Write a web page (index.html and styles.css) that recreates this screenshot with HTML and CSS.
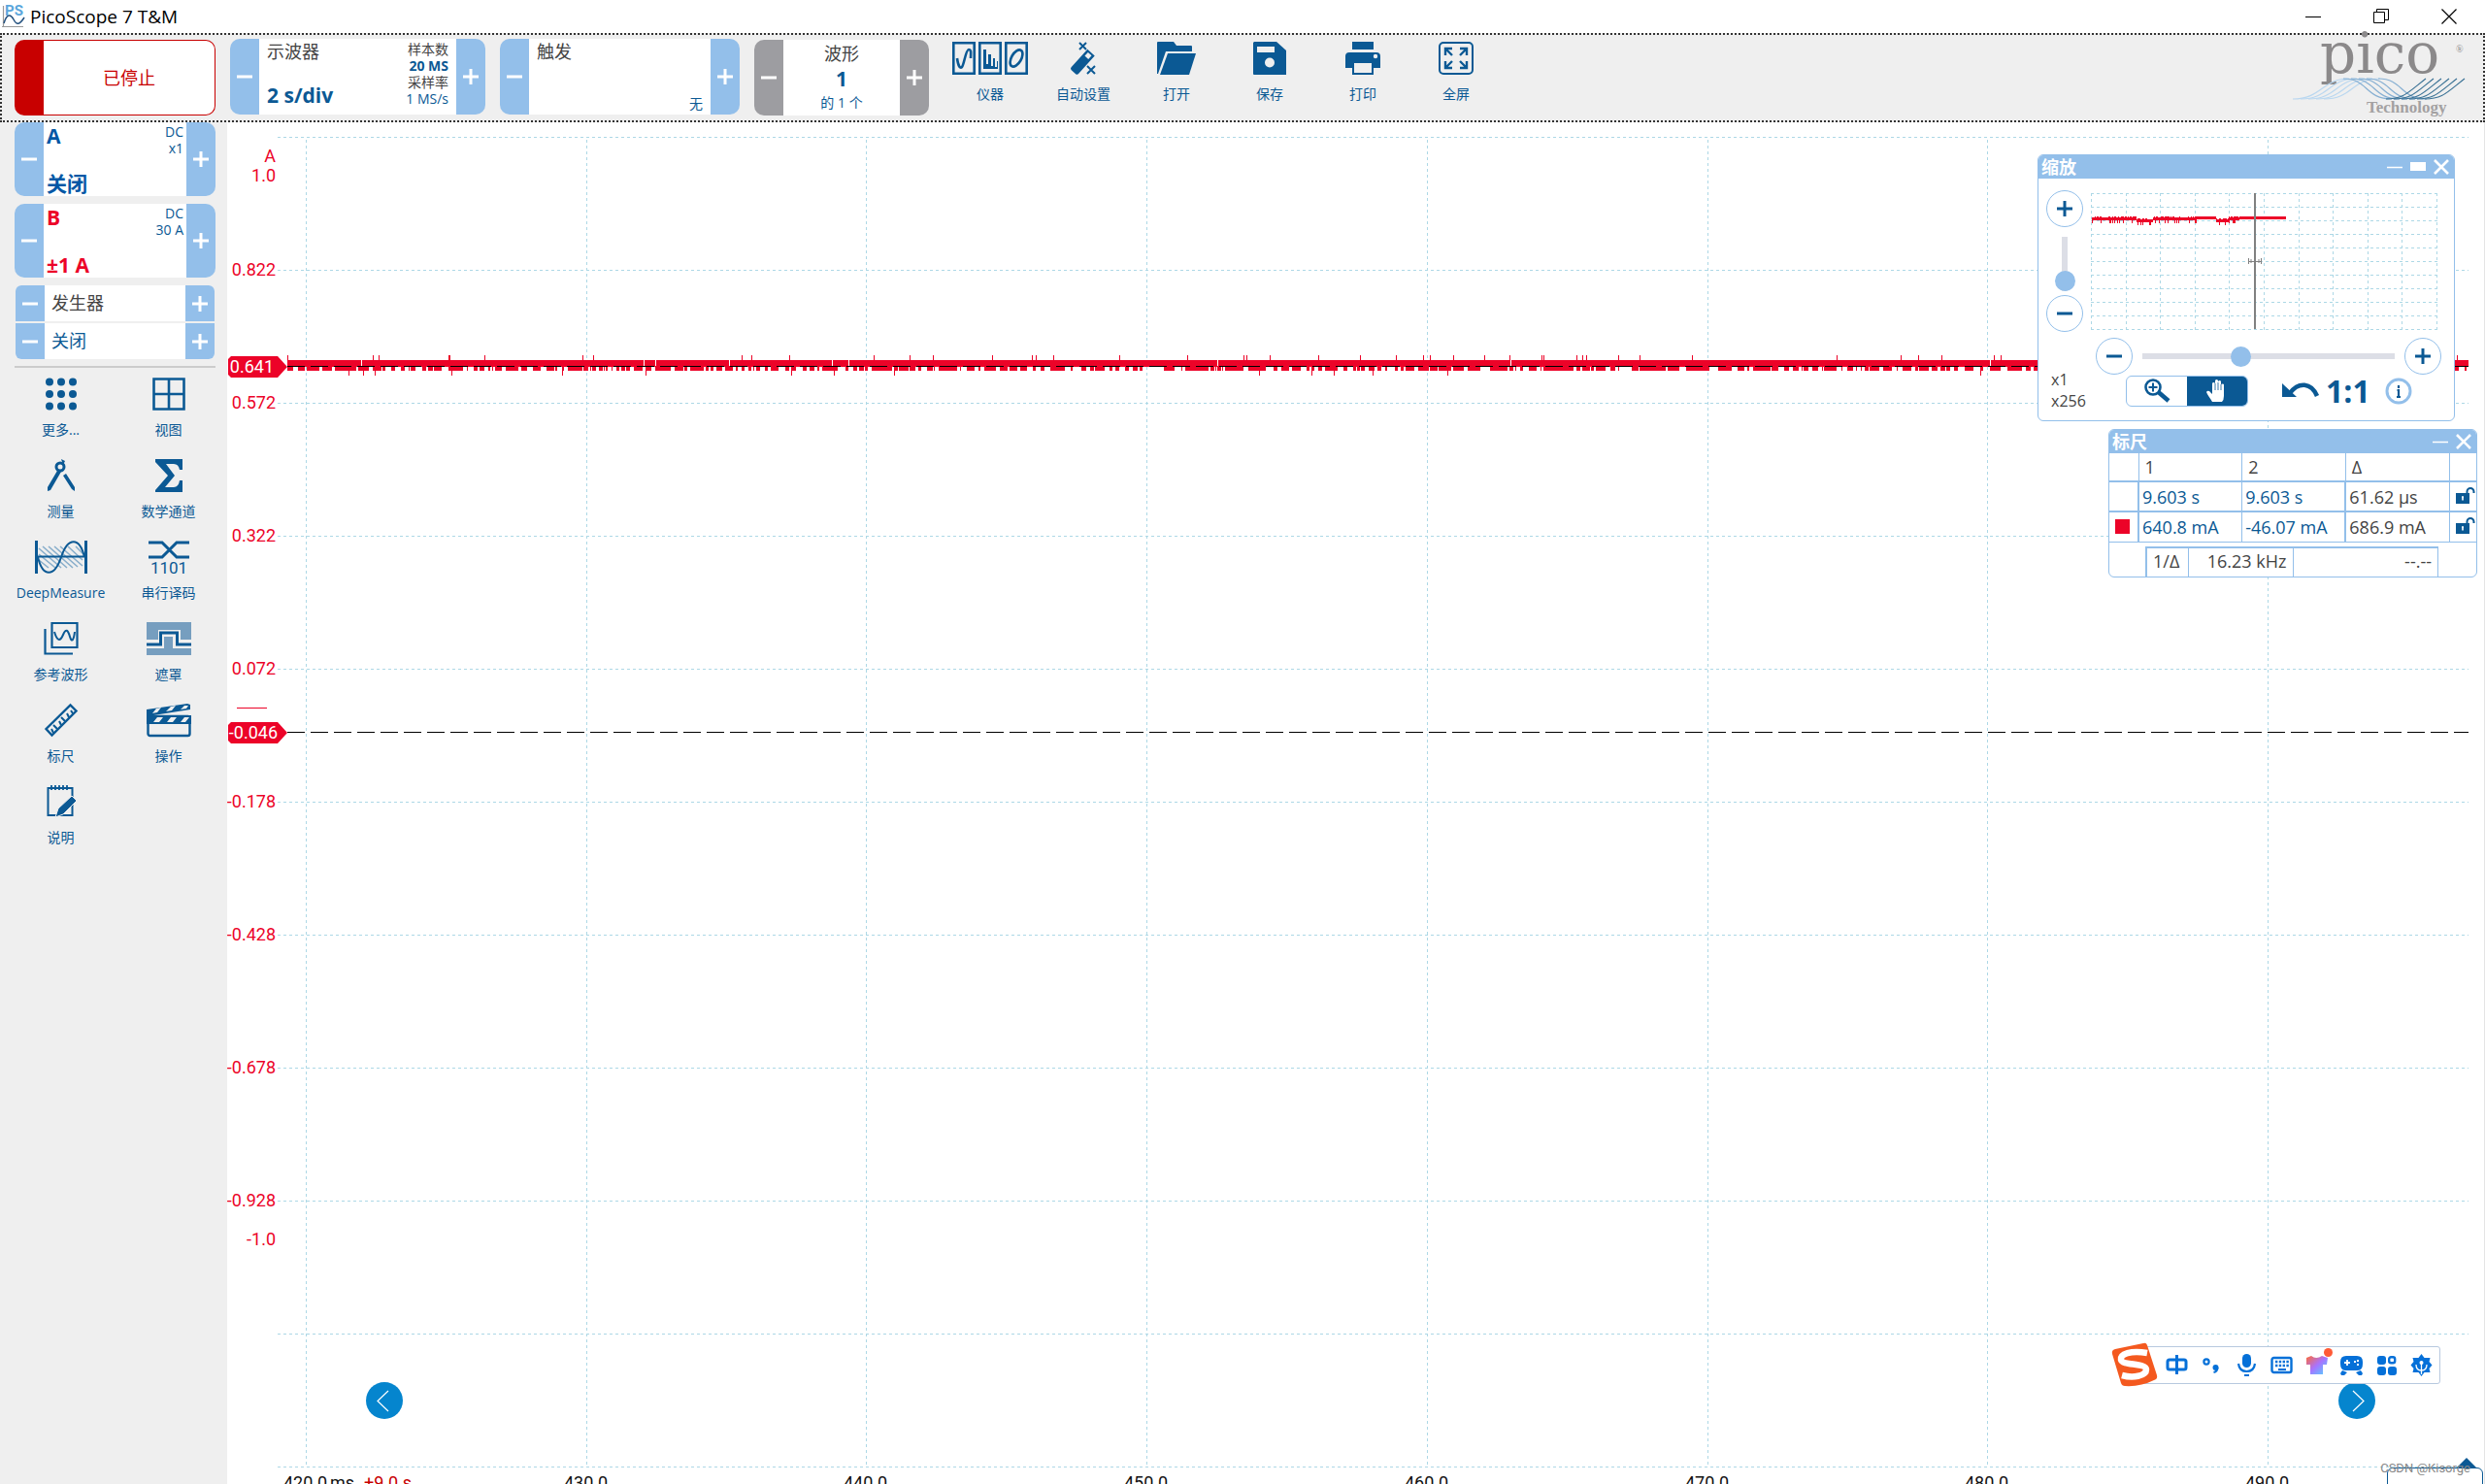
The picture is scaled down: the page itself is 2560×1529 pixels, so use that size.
FILE: index.html
```html
<!DOCTYPE html>
<html lang="zh-CN">
<head>
<meta charset="utf-8">
<title>PicoScope 7 T&amp;M</title>
<link rel="stylesheet" href="styles.css">
</head>
<body>
<svg class="defs" aria-hidden="true">
  <symbol id="minus" viewBox="0 0 16 16"><path d="M0 8h16" stroke="currentColor" stroke-width="3"/></symbol>
  <symbol id="plus" viewBox="0 0 16 16"><path d="M0 8h16M8 0v16" stroke="currentColor" stroke-width="3"/></symbol>
  <symbol id="close" viewBox="0 0 16 16"><path d="M1 1l14 14M15 1L1 15" stroke="currentColor" stroke-width="2.6"/></symbol>
  <symbol id="dash" viewBox="0 0 16 16"><path d="M0 8.500h16" stroke="currentColor" stroke-width="1.400"/></symbol>
  <symbol id="unlock" viewBox="0 0 20 18"><path d="M0 6h14v11H0z" fill="currentColor"/><path d="M11.500 6V4.500a3.500 3.500 0 0 1 7 0V6" fill="none" stroke="currentColor" stroke-width="2"/><path d="M7 9.500v4M6 10h2" stroke="#fff" stroke-width="1.600"/></symbol>
</svg>

<header class="titlebar">
  <svg class="app-icon" viewBox="0 0 24 24"><path d="M1.500 1v22M0 22.500h22" stroke="#9a9a9a" stroke-width="1.200"/><path d="M2 19C5 9 9 9 12 15s6 6 11-2" fill="none" stroke="#23507e" stroke-width="1.500"/><text x="3" y="11" font-size="15" class="app-ps">PS</text></svg>
  <h1>PicoScope 7 T&amp;M</h1>
  <div class="window-buttons">
    <button aria-label="最小化"><svg width="16" height="16"><path d="M0 8.500h16" stroke="#000"/></svg></button>
    <button aria-label="还原"><svg width="16" height="16"><path d="M.5 3.500h11v11H.5zM3.500 3.500V.5h12v11h-4" fill="none" stroke="#000"/></svg></button>
    <button aria-label="关闭"><svg width="16" height="16"><path d="M.5.5l15 15M15.500.5l-15 15" stroke="#000" stroke-width="1.200"/></svg></button>
  </div>
</header>

<div class="toolbar">
  <button class="run-button"><span>已停止</span></button>

  <section class="stepper scope-box">
    <button class="step" aria-label="减小时基"><svg><use href="#minus"/></svg></button>
    <div class="stepper-body split">
      <div class="col-between"><span class="label">示波器</span><strong class="value">2 s/div</strong></div>
      <div class="samples"><span class="dim">样本数</span><strong>20 MS</strong><span class="dim">采样率</span><span>1 MS/s</span></div>
    </div>
    <button class="step" aria-label="增大时基"><svg><use href="#plus"/></svg></button>
  </section>

  <section class="stepper trigger-box">
    <button class="step" aria-label="上一触发模式"><svg><use href="#minus"/></svg></button>
    <div class="stepper-body col-between"><span class="label">触发</span><span class="trigger-mode">无</span></div>
    <button class="step" aria-label="下一触发模式"><svg><use href="#plus"/></svg></button>
  </section>

  <section class="stepper grey wave-box">
    <button class="step" aria-label="上一个波形"><svg><use href="#minus"/></svg></button>
    <div class="stepper-body wave-body"><span class="label">波形</span><strong class="value">1</strong><span class="small">的 1 个</span></div>
    <button class="step" aria-label="下一个波形"><svg><use href="#plus"/></svg></button>
  </section>

  <nav class="tools">
    <button><svg width="78" height="34"><g fill="none" stroke="currentColor" stroke-width="2.600"><path d="M1.300 1.300h21.400v31.400H1.300zM28.300 1.300h21.400v31.400H28.300zM55.300 1.300h21.400v31.400H55.300z"/><path d="M5 17c1 8 3 11 5 9s4-18 7-18 2 4 2 9"/><ellipse cx="66" cy="17" rx="5" ry="9.500" transform="rotate(30 66 17)"/></g><path d="M32 28V8h3v15h2V13h3v12h2v-8h2v9h2v-6h1v8z" fill="currentColor"/></svg>仪器</button>
    <button><svg width="30" height="34"><g transform="rotate(42 15 20)"><path d="M10 8h10v25a2 2 0 0 1-2 2h-6a2 2 0 0 1-2-2z" fill="currentColor"/><path d="M12.500 10h5v5h-5z" fill="#efefef"/></g><path d="M11 1l7 7M18 1l-7 7M19 25l8 8M27 25l-8 8" stroke="currentColor" stroke-width="2"/></svg>自动设置</button>
    <button><svg width="40" height="34"><path d="M0 33V1q0-1 1-1h16l3 4h15q1 0 1 1v5H9L1 33z" fill="currentColor"/><path d="M3 34L11 12h29L33 34z" fill="currentColor"/></svg>打开</button>
    <button><svg width="34" height="34"><path d="M1 0h23l10 9v25H1q-1 0-1-1V1z" fill="currentColor"/><path d="M4 5h18v6H4z" fill="#efefef"/><circle cx="17" cy="21.500" r="5" fill="#efefef"/></svg>保存</button>
    <button><svg width="36" height="34"><path d="M7 0h22v8H7zM4 11h28q4 0 4 4v12h-7v7H7v-7H0V15q0-4 4-4z" fill="currentColor"/><path d="M9 22h18v10H9z" fill="#efefef"/><circle cx="31" cy="15" r="2.200" fill="#efefef"/></svg>打印</button>
    <button><svg width="36" height="34"><rect x="1" y="1" width="34" height="32" rx="4" fill="none" stroke="currentColor" stroke-width="2"/><path d="M14 14L8 8M22 14l6-6M14 20l-6 6M22 20l6 6M7 14V7h7M22 7h7v7M7 20v7h7M22 27h7v-7" fill="none" stroke="currentColor" stroke-width="2.400"/></svg>全屏</button>
  </nav>

  <svg class="brand" viewBox="0 0 182 84" role="img" aria-label="pico Technology">
    <text x="30" y="35" class="brand-name">pico</text><text x="170" y="14" class="brand-reg">®</text>
    <g fill="none" stroke-width="1.200">
      <g stroke="#b9d7f0"><path d="M2 62C32 62 32 41 60 41"/><path d="M10 62C40 62 38 41 68 41"/><path d="M18 62C48 62 46 41 76 41"/><path d="M26 62C56 62 54 41 84 41"/><path d="M34 62C64 62 62 41 92 41"/></g>
      <g stroke="#86afd2"><path d="M54 41C80 41 76 62 104 62"/><path d="M62 41C88 41 84 62 112 62"/><path d="M70 41C96 41 92 62 120 62"/><path d="M78 41C104 41 100 62 128 62"/><path d="M90 41C116 41 112 62 140 62"/></g>
      <g stroke="#3c7396"><path d="M98 62C116 62 120 56 139 41"/><path d="M106 62C124 62 128 56 147 41"/><path d="M114 62C132 62 136 56 155 41"/><path d="M122 62C140 62 144 56 163 41"/><path d="M130 62C148 62 152 56 171 41"/><path d="M138 62C156 62 160 56 179 41"/></g>
    </g>
    <text x="78" y="76" class="brand-sub">Technology</text>
  </svg>
</div>

<div class="workspace">
  <aside class="sidebar">
    <section class="stepper channel">
      <button class="step" aria-label="A 减"><svg><use href="#minus"/></svg></button>
      <div class="stepper-body split">
        <div class="col-between"><strong class="value chan-a">A</strong><strong class="value chan-a">关闭</strong></div>
        <div class="coupling"><span>DC</span><span>x1</span></div>
      </div>
      <button class="step" aria-label="A 加"><svg><use href="#plus"/></svg></button>
    </section>
    <section class="stepper channel">
      <button class="step" aria-label="B 减"><svg><use href="#minus"/></svg></button>
      <div class="stepper-body split">
        <div class="col-between"><strong class="value chan-b">B</strong><strong class="value chan-b">±1 A</strong></div>
        <div class="coupling"><span>DC</span><span>30 A</span></div>
      </div>
      <button class="step" aria-label="B 加"><svg><use href="#plus"/></svg></button>
    </section>
    <section class="generator">
      <div class="gen-row"><button class="step" aria-label="上一个"><svg><use href="#minus"/></svg></button><span class="label">发生器</span><button class="step" aria-label="下一个"><svg><use href="#plus"/></svg></button></div>
      <div class="gen-row"><button class="step" aria-label="减"><svg><use href="#minus"/></svg></button><span>关闭</span><button class="step" aria-label="加"><svg><use href="#plus"/></svg></button></div>
    </section>
    <nav class="side-tools">
      <button><svg width="34" height="34" fill="currentColor"><circle cx="5" cy="4.500" r="4"/><circle cx="17" cy="4.500" r="4"/><circle cx="29" cy="4.500" r="4"/><circle cx="5" cy="17" r="4"/><circle cx="17" cy="17" r="4"/><circle cx="29" cy="17" r="4"/><circle cx="5" cy="29.500" r="4"/><circle cx="17" cy="29.500" r="4"/><circle cx="29" cy="29.500" r="4"/></svg>更多...</button>
      <button><svg width="34" height="34"><path d="M1.500 1.500h31v31h-31zM17 1v32M1 17h32" fill="none" stroke="currentColor" stroke-width="2.600"/></svg>视图</button>
      <button><svg width="30" height="34"><circle cx="14" cy="8" r="4" fill="none" stroke="currentColor" stroke-width="3"/><path d="M15 0l4 2-2 4z" fill="currentColor"/><path d="M11 12L1 29v4l3-1 11-19zM17 17l3-2 9 14v4l-3-2z" fill="currentColor"/></svg>测量</button>
      <button><svg width="30" height="34"><path d="M1 0h28v11h-3q-1-6-6-6H12l9 12-10 12h9q5 0 6-7h3v12H1v-2l13-15L1 3z" fill="currentColor"/></svg>数学通道</button>
      <button><svg width="54" height="34"><path d="M4 8l23 20M4 14l17 14M4 20l10 8M8 6l25 22M14 6l25 22M20 6l24 21M26 6l23 20M34 6l15 14M42 6l8 8" stroke="#88aecb" stroke-width="1.600"/><path d="M1.500 0v34M52.500 0v34" stroke="currentColor" stroke-width="3"/><path d="M2 16.500h50M3 17C8 38 20 38 27 17S46-4 51 17" fill="none" stroke="currentColor" stroke-width="2"/></svg>DeepMeasure</button>
      <button><svg width="44" height="34"><path d="M1 2h14l15 15h13M1 17h14L30 2h13" fill="none" stroke="currentColor" stroke-width="3"/><text x="22" y="34" text-anchor="middle" class="icon-digits">1101</text></svg>串行译码</button>
      <button><svg width="36" height="34"><path d="M8.500 1h26v25h-26zM1.500 7v25.500H30" fill="none" stroke="currentColor" stroke-width="2.200"/><path d="M11 10c3 10 6 10 9 3s5-5 7 2 4 3 5-5" fill="none" stroke="currentColor" stroke-width="2"/></svg>参考波形</button>
      <button><svg width="46" height="34"><path d="M0 0h46v18H35V8H12v10H0zM0 27h18V15h9v12h19v7H0z" fill="#769ebf"/><path d="M0 23h14.500V11h17v12H46" fill="none" stroke="currentColor" stroke-width="3"/></svg>遮罩</button>
      <button><svg width="34" height="34"><path d="M1.500 26L26.500 1.500l6 6L7.500 32.500z" fill="none" stroke="currentColor" stroke-width="2.400"/><path d="M8 30l-2-4M12 26l-4-4M16 22l-2-4M20 18l-4-4M24 14l-2-4M28 10l-2-3" transform="translate(1 0)" stroke="currentColor" stroke-width="2"/></svg>标尺</button>
      <button><svg width="46" height="34"><rect x="1.500" y="13" width="43" height="20" rx="2" fill="none" stroke="currentColor" stroke-width="2.400"/><path d="M0 6L42 0l3 1v5L7 12h39v9H0z" fill="currentColor"/><path d="M6 10l4-5 5-1-4 5zM20 8l5-5 5-1-4 5zM35 6l4-4 4 0-2 3zM7 19l4-5h6l-4 5zM21 19l4-5h6l-4 5zM35 19l4-5h5l-4 5z" fill="#efefef"/></svg>操作</button>
      <button><svg width="30" height="34"><path d="M1.500 3h25v28h-25z" fill="none" stroke="currentColor" stroke-width="2"/><path d="M5 0v5M9 0v5M13 0v5M17 0v5M21 0v5" stroke="currentColor" stroke-width="1.800"/><path d="M9 33l3-9L26 11l5 5-14 14z" fill="currentColor" stroke="#efefef"/></svg>说明</button>
    </nav>
  </aside>

  <main class="scope">
    <svg class="plot" id="plot" role="img" aria-label="通道 B 波形"></svg>

    <button class="page-arrow prev" aria-label="上一页"><svg width="38" height="38"><path d="M23 9L12 19.500 23 30" fill="none" stroke="#fff" stroke-width="1.200"/></svg></button>
    <button class="page-arrow next" aria-label="下一页"><svg width="38" height="38"><path d="M15 9l11 10.500L15 30" fill="none" stroke="#fff" stroke-width="1.200"/></svg></button>

    <section class="panel zoom-panel">
      <header class="panel-head"><h2>缩放</h2>
        <button aria-label="最小化"><svg><use href="#dash"/></svg></button>
        <button aria-label="还原"><svg><rect x="0" y="3" width="16" height="9" fill="#fff"/></svg></button>
        <button aria-label="关闭缩放"><svg><use href="#close"/></svg></button>
      </header>
      <div class="zoom-top">
        <div class="zoom-y">
          <button class="round" aria-label="垂直放大"><svg><use href="#plus"/></svg></button>
          <input type="range" class="range-y" aria-label="垂直缩放" min="0" max="100" value="0">
          <button class="round" aria-label="垂直缩小"><svg><use href="#minus"/></svg></button>
        </div>
        <svg class="overview" id="overview" viewBox="0 0 358 142"></svg>
      </div>
      <div class="zoom-bottom">
        <div class="factors"><span>x1</span><span>x256</span></div>
        <div class="zoom-controls">
          <div class="zoom-x">
            <button class="round" aria-label="水平缩小"><svg><use href="#minus"/></svg></button>
            <input type="range" class="range-x" aria-label="水平缩放" min="0" max="100" value="38">
            <button class="round" aria-label="水平放大"><svg><use href="#plus"/></svg></button>
          </div>
          <div class="zoom-modes">
            <div class="segment">
              <button aria-label="放大镜"><svg width="28" height="26"><circle cx="10" cy="9" r="7.500" fill="none" stroke="currentColor" stroke-width="2.600"/><path d="M5.500 9h9M10 4.500v9" stroke="currentColor" stroke-width="2"/><path d="M15.500 14L26 23" stroke="currentColor" stroke-width="4.500"/></svg></button>
              <button class="on" aria-label="平移"><svg width="24" height="26"><path d="M7 24C5 20 2 17 1 14q1-2 3-1l3 3V5q1-2 3 0V2q1.500-2 3 0v1q2-2 3 0v3q2-1 3 0v12q0 4-2 6z" fill="#fff"/><path d="M10 5v7M13 4v8M16 6v6" stroke="#0b5994" stroke-width=".8"/></svg></button>
            </div>
            <button class="plain undo" aria-label="撤消"><svg width="38" height="18"><path d="M8 11C17-1 30 0 36 14" fill="none" stroke="currentColor" stroke-width="4.500"/><path d="M0 1v14h15z" fill="currentColor"/></svg></button>
            <button class="plain one-one">1:1</button>
            <button class="plain info" aria-label="信息"><svg width="28" height="28"><circle cx="14" cy="14" r="12" fill="none" stroke="#93bfea" stroke-width="3"/><path d="M14 8v3M12.500 13H14v7M12 20h4" fill="none" stroke="currentColor" stroke-width="2.200"/></svg></button>
          </div>
        </div>
      </div>
    </section>

    <section class="panel ruler-panel">
      <header class="panel-head"><h2>标尺</h2>
        <button aria-label="最小化标尺"><svg><use href="#dash"/></svg></button>
        <button aria-label="关闭标尺"><svg><use href="#close"/></svg></button>
      </header>
      <table class="rulers">
        <colgroup><col class="c-key"><col><col><col><col class="c-lock"></colgroup>
        <thead><tr><th></th><th>1</th><th>2</th><th>Δ</th><th></th></tr></thead>
        <tbody>
          <tr><td></td><td class="link">9.603 s</td><td class="link">9.603 s</td><td>61.62 µs</td><td><button class="plain" aria-label="锁定时间标尺"><svg width="20" height="18"><use href="#unlock"/></svg></button></td></tr>
          <tr><td><i class="swatch"></i></td><td class="link">640.8 mA</td><td class="link">-46.07 mA</td><td>686.9 mA</td><td><button class="plain" aria-label="锁定信号标尺"><svg width="20" height="18"><use href="#unlock"/></svg></button></td></tr>
        </tbody>
      </table>
      <table class="inverse"><colgroup><col class="c-inv"><col class="c-freq"><col></colgroup><tbody><tr><th>1/Δ</th><td>16.23 kHz</td><td>--.--</td></tr></tbody></table>
    </section>

    <div class="ime">
      <svg class="ime-logo" viewBox="0 0 48 46"><path d="M4 7L33 1q3-1 4 2l10 31q1 4-3 5-14 7-30 6-3 0-4-3L1 12q-1-4 3-5z" fill="#f4591f"/><path d="M37 11C20 8 9 12 10 18s26 3 26 10-14 9-25 6" fill="none" stroke="#fff" stroke-width="6.500"/></svg>
      <div class="ime-bar">
        <button aria-label="中文"><svg><g fill="none" stroke="currentColor" stroke-width="3"><rect x="2" y="6" width="19" height="10" rx="2"/><path d="M11.500 1v20"/></g></svg></button>
        <button aria-label="标点"><svg><circle cx="6" cy="8" r="2.600" fill="none" stroke="currentColor" stroke-width="2.200"/><circle cx="15.500" cy="14" r="3" fill="currentColor"/><path d="M17.500 14q0 4-4 5" fill="none" stroke="currentColor" stroke-width="2"/></svg></button>
        <button aria-label="语音"><svg><rect x="7" y="0" width="9" height="14" rx="4.500" fill="currentColor"/><path d="M3 10q1 8 8.500 8T20 10M9 22h5" fill="none" stroke="currentColor" stroke-width="2.200"/></svg></button>
        <button aria-label="键盘"><svg><rect x="1.500" y="4" width="20" height="15" rx="2" fill="none" stroke="currentColor" stroke-width="2.400"/><path d="M5 8h14M5 12h14" stroke="currentColor" stroke-width="2.400" stroke-dasharray="2.400 1.400"/><path d="M8 16h8" stroke="currentColor" stroke-width="2"/></svg></button>
        <button class="skin" aria-label="皮肤"><svg><defs><linearGradient id="shirt" x1="0" y1="0" x2="1" y2="1"><stop offset="0" stop-color="#ff6a36"/><stop offset=".5" stop-color="#a873ff"/><stop offset="1" stop-color="#4fd6ff"/></linearGradient></defs><path d="M1 4l5-2q5 4 11 0l6 2-1 7h-4v10H5V11H1z" fill="url(#shirt)"/></svg><i class="dot"></i></button>
        <button aria-label="游戏"><svg><path d="M6 2h11q6 0 6 6v2q0 7-5 7H5q-5 0-5-7V8q0-6 6-6zM0 20l2-3 5 2-3 3H1zM23 20l-2-3-5 2 3 3h3z" fill="currentColor"/><path d="M4 9h6M7 6v6M14 8h2M17 11h2M17 7h2" stroke="#fff" stroke-width="1.800"/></svg></button>
        <button aria-label="应用"><svg><rect x="2" y="2" width="9" height="9" rx="3" fill="currentColor"/><rect x="2" y="13" width="9" height="9" rx="3" fill="currentColor"/><rect x="13" y="13" width="9" height="9" rx="3" fill="currentColor"/><rect x="14.200" y="3.200" width="6" height="6" rx="2" fill="none" stroke="currentColor" stroke-width="2.400"/></svg></button>
        <button aria-label="设置"><svg><path d="M11.500 0l3 4h6l-1 4 3 3.500-3 3.500 1 4h-6l-3 4-3-4h-6l1-4-3-3.500L3.500 8l-1-4h6z" fill="currentColor"/><path d="M11.500 8v13M6 11q0 6 5.500 6T17 11" fill="none" stroke="#fff" stroke-width="1.300"/><circle cx="11.500" cy="9" r="2" fill="#fff"/></svg></button>
      </div>
    </div>

    <div class="corner-tab"></div>
    <span class="watermark">CSDN @Kisorge</span>
  </main>
</div>
<script src="plot.js"></script>
</body>
</html>
```
FILE: styles.css
```css
:root {
  --blue: #0b5994;
  --light: #93bfea;
  --red: #ec0328;
  --grey: #efefef;
  --text: #444;
}
* { box-sizing: border-box; }
body {
  margin: 0;
  height: 100vh;
  overflow: hidden;
  display: flex;
  flex-direction: column;
  background: #fff;
  color: var(--blue);
  font: 14px/18px "Open Sans", "Noto Sans CJK SC", sans-serif;
}
button {
  border: 0;
  padding: 0;
  background: none;
  color: inherit;
  font: inherit;
}
svg { display: block; overflow: visible; }
.defs { position: absolute; width: 0; height: 0; }

/* title bar */
.titlebar { display: flex; align-items: center; gap: 5px; flex: 0 0 34px; padding: 0 2px; color: #000; }
.app-icon { width: 24px; height: 24px; }
.app-ps { font-family: Roboto, sans-serif; font-weight: 700; fill: #5aa6dc; }
.titlebar h1 { margin: 0; font-size: 19px; line-height: 24px; font-weight: 400; flex: 1; }
.window-buttons { display: flex; }
.window-buttons button { width: 70px; display: flex; justify-content: center; }

/* toolbar */
.toolbar {
  flex: 0 0 92px;
  display: flex;
  align-items: flex-start;
  padding: 4px 16px 0 13px;
  border: 2px dotted #333;
  background: var(--grey);
}
.run-button {
  width: 207px;
  height: 78px;
  margin: 1px 15px 0 0;
  border: 1px solid #c80000;
  border-left-width: 30px;
  border-radius: 10px;
  background: #fff;
  color: #c80000;
  font-size: 18px;
}
.stepper { display: flex; height: 78px; }
.step {
  flex: 0 0 30px;
  display: flex;
  align-items: center;
  justify-content: center;
  background: var(--light);
  color: #fff;
}
.step svg { width: 16px; height: 16px; }
.stepper .step:first-child { border-radius: 10px 0 0 10px; }
.stepper .step:last-child { border-radius: 0 10px 10px 0; }
.grey .step { background: #9d9da1; }
.stepper-body { flex: 1; background: #fff; padding: 0 8px; }
.split { display: flex; justify-content: space-between; }
.col-between { display: flex; flex-direction: column; justify-content: space-between; }
.label { font-size: 18px; line-height: 26px; color: var(--text); }
.value { font-size: 21px; line-height: 26px; }
.scope-box { width: 263px; margin-right: 15px; }
.scope-box .col-between { padding-bottom: 7px; }
.samples { display: flex; flex-direction: column; align-items: flex-end; line-height: 17px; padding-top: 2px; }
.dim { color: var(--text); }
.trigger-box { width: 247px; margin-right: 15px; }
.trigger-mode { align-self: flex-end; line-height: 22px; }
.wave-box { width: 180px; margin-top: 1px; }
.wave-body { display: flex; flex-direction: column; align-items: center; padding-top: 1px; }
.small { line-height: 24px; }
.tools { display: flex; margin-left: 15px; }
.tools button { width: 96px; }
.tools button, .side-tools button { display: flex; flex-direction: column; align-items: center; gap: 11px; }
.tools button { padding-top: 3px; }
.brand { width: 182px; height: 80px; margin-left: auto; }
.brand { height: 84px; }
.brand-name { font: 58px "DejaVu Serif", serif; fill: #8b898a; }
.brand-reg { font: 10px "Liberation Serif", serif; fill: #8b898a; }
.brand-sub { font: bold 17px "Liberation Serif", serif; fill: #a3a1a2; }

/* sidebar */
.workspace { flex: 1; min-height: 0; display: flex; }
.sidebar { flex: 0 0 234px; padding: 0 12px 0 15px; background: var(--grey); }
.channel { height: 76px; margin-bottom: 8px; }
.channel .stepper-body { padding: 0 3px; }
.channel .col-between { padding-top: 1px; }
.coupling { display: flex; flex-direction: column; align-items: flex-end; line-height: 17px; padding-top: 1px; }
.chan-a { color: #0057a5; }
.chan-b { color: var(--red); }
.generator { display: flex; flex-direction: column; gap: 2px; padding-bottom: 7px; border-bottom: 2px solid #ccc; }
.gen-row { display: flex; height: 37px; margin: 0 1px; overflow: hidden; background: #fff; font-size: 18px; line-height: 36px; }
.gen-row:first-child { border-radius: 6px 6px 0 0; }
.gen-row:last-child { border-radius: 0 0 6px 6px; }
.gen-row span { flex: 1; padding-left: 7px; line-height: 36px; }
.side-tools {
  display: grid;
  grid-template-columns: 111px 111px;
  grid-auto-rows: 84px;
  margin: 10px -8px 0;
}
.side-tools button { justify-content: flex-start; }
.icon-digits { font: 17px Roboto, sans-serif; fill: var(--blue); }

/* plot */
.scope { flex: 1; min-width: 0; position: relative; overflow: hidden; border-right: 1px solid #e4e4e4; }
.plot { width: 100%; height: 100%; font: 18px Roboto, sans-serif; }
.grid { fill: none; stroke: #add8e6; stroke-dasharray: 3 3; }
.axis-y { fill: var(--red); text-anchor: end; }
.axis-x { fill: #111; }
.axis-offset { fill: #c80000; }
.trace { fill: none; stroke: var(--red); }
.ruler-line { stroke: #000; stroke-dasharray: 18 6; }
.flag { fill: var(--red); }
.flag-text { fill: #fff; text-anchor: end; }
.page-arrow { position: absolute; top: 1298px; width: 38px; height: 38px; border-radius: 50%; background: #0585ce; }
.prev { left: 143px; }
.next { right: 112px; }

/* floating panels */
.panel { position: absolute; background: #fff; border: 1px solid var(--light); border-radius: 6px; overflow: hidden; }
.panel-head { display: flex; align-items: center; gap: 8px; height: 24px; padding: 0 5px 0 3px; background: var(--light); color: #fff; }
.panel-head h2 { flex: 1; margin: 0; font-size: 18px; line-height: 24px; }
.panel-head svg { width: 16px; height: 16px; }
.zoom-panel { top: 33px; right: 30px; width: 430px; height: 275px; }
.zoom-top { display: flex; gap: 8px; padding: 12px 8px 0; }
.zoom-y { display: flex; flex-direction: column; align-items: center; gap: 4px; width: 38px; }
.overview { width: 358px; height: 142px; margin-top: 3px; }
.round {
  flex: 0 0 38px;
  width: 38px;
  height: 38px;
  display: flex;
  align-items: center;
  justify-content: center;
  border: 1px solid var(--light);
  border-radius: 50%;
}
.round svg { width: 16px; height: 16px; }
input[type="range"] { appearance: none; margin: 0; background: none; }
.range-y { writing-mode: vertical-lr; direction: rtl; width: 22px; height: 62px; padding-top: 6px; }
.range-x { flex: 1; min-width: 0; height: 22px; }
.range-y::-webkit-slider-runnable-track { width: 6px; background: #dcdee6; }
.range-x::-webkit-slider-runnable-track { height: 6px; background: #dcdee6; }
.range-x::-webkit-slider-thumb { appearance: none; width: 21px; height: 21px; margin-top: -7px; border-radius: 50%; background: var(--light); }
.range-y::-webkit-slider-thumb { appearance: none; width: 21px; height: 21px; margin-left: -7px; border-radius: 50%; background: var(--light); }
.zoom-bottom { display: flex; padding: 6px 13px 0; }
.factors { display: flex; flex-direction: column; width: 46px; padding-top: 32px; font-size: 16px; line-height: 22px; color: var(--text); }
.zoom-controls { flex: 1; }
.zoom-x { display: flex; align-items: center; gap: 10px; }
.zoom-modes { display: flex; align-items: center; height: 34px; padding-left: 31px; }
.segment { display: flex; width: 126px; height: 32px; border: 1px solid var(--light); border-radius: 6px; overflow: hidden; }
.segment button { flex: 1; display: flex; align-items: center; justify-content: center; }
.segment .on { background: var(--blue); }
.undo { margin-left: 35px; }
.one-one { margin: 0 15px 0 7px; font: bold 32px/32px "Open Sans", sans-serif; }

.ruler-panel { top: 316px; right: 7px; width: 380px; height: 153px; font-size: 18px; }
table { border-collapse: collapse; table-layout: fixed; }
th, td { padding: 0 0 0 3px; text-align: left; font-weight: 400; color: var(--text); border: 1px solid var(--light); white-space: nowrap; }
.rulers { width: 100%; border-style: hidden; border-bottom: 1px solid var(--light); }
.rulers tr { height: 31px; }
.rulers thead tr { height: 29px; }
.rulers th { padding-left: 6px; }
.rulers .link { color: var(--blue); }
.rulers tbody td { border-top: 2px solid var(--light); }
.rulers td:nth-child(2) { border-left-width: 2px; }
.rulers td:nth-child(4) { border-left-width: 2px; }
.c-key { width: 30px; }
.c-lock { width: 28px; }
.rulers td:last-child { padding-left: 6px; color: var(--blue); }
.swatch { display: block; width: 15px; height: 15px; margin-left: 3px; background: var(--red); }
.inverse { width: 302px; margin: 4px 0 0 37px; border-top: 2px solid var(--light); border-left: 2px solid var(--light); }
.inverse tr { height: 31px; }
.inverse th, .inverse td { vertical-align: top; line-height: 26px; }
.inverse th { padding-left: 6px; }
.inverse td { text-align: right; padding: 0 6px; }
.c-inv { width: 43px; }
.c-freq { width: 108px; }

/* input method bar */
.ime { position: absolute; top: 1257px; right: 45px; display: flex; align-items: center; color: #0570d8; }
.ime-logo { width: 48px; height: 46px; z-index: 1; }
.ime-bar { display: flex; height: 39px; margin-left: -24px; padding-left: 24px; padding-right: 1px; background: #fff; border: 1px solid #b8c9df; border-radius: 3px; }
.ime-bar button { display: flex; align-items: center; justify-content: center; width: 36px; position: relative; }
.ime-bar svg { width: 23px; height: 23px; }
.dot { position: absolute; top: 1px; right: 1px; width: 9px; height: 9px; border-radius: 50%; background: #ff5a36; }

.corner-tab { position: absolute; top: 1386px; right: 1px; width: 99px; height: 40px; border: 1px solid var(--blue); border-radius: 6px; }
.corner-tab::before { content: ""; position: absolute; top: -11px; right: 6px; border: 10px solid transparent; border-top: 0; border-bottom-color: var(--blue); }
.watermark { position: absolute; top: 1378px; right: 14px; font: 13px/18px Roboto, sans-serif; color: #888; }
```
FILE: plot.js
```js
const NS = 'http://www.w3.org/2000/svg';
const LEFT = 50, TOP = 15, ROW = 137, COL = 288.7, FIRST = 81, RIGHT_PAD = 16;

function add(parent, tag, attrs, text) {
  const el = document.createElementNS(NS, tag);
  for (const key in attrs) el.setAttribute(key, attrs[key]);
  if (text) el.textContent = text;
  parent.appendChild(el);
  return el;
}

function noise(seed) {
  return () => (seed = (seed * 16807) % 2147483647) / 2147483647;
}

function drawPlot() {
  const plot = document.getElementById('plot');
  plot.replaceChildren();
  const right = plot.clientWidth - RIGHT_PAD;
  const bottom = TOP + 10 * ROW;
  const columns = [];
  for (let i = 0; FIRST + i * COL < right; i++) columns.push(Math.round(FIRST + i * COL));

  let grid = '';
  for (let r = 0; r <= 10; r++) grid += `M${LEFT + 2} ${TOP + r * ROW + 0.5}H${right}`;
  columns.forEach(x => { grid += `M${x + 0.5} ${TOP + 3}V${bottom}`; });
  add(plot, 'path', { d: grid, class: 'grid' });

  const labels = [['A', 41], ['1.0', 61], ['-1.0', 1157]];
  ['0.822', '0.572', '0.322', '0.072', '-0.178', '-0.428', '-0.678', '-0.928']
    .forEach((t, i) => labels.push([t, 158 + i * ROW]));
  labels.forEach(([t, y]) => add(plot, 'text', { x: LEFT, y, class: 'axis-y' }, t));

  columns.forEach((x, i) => {
    add(plot, 'text', { x: x - 23, y: bottom + 23, class: 'axis-x' }, (420 + i * 10).toFixed(1));
  });
  add(plot, 'text', { x: FIRST + 25, y: bottom + 23, class: 'axis-x' }, 'ms');
  add(plot, 'text', { x: 141, y: bottom + 23, class: 'axis-offset' }, '+9.0 s');

  const rand = noise(641);
  let d = '';
  for (let x = 62; x < right; x++) {
    const top = rand() < 0.06 ? 240 : rand() < 0.015 ? 251 : 245;
    const low = rand() < 0.02 ? 261 : rand() < 0.62 ? 256 : 252;
    const run = 1 + Math.floor(rand() * 4);
    d += `M${x + 0.5} ${top}V${low}`;
    for (let k = 1; k < run && x + 1 < right; k++) {
      x++;
      d += `M${x + 0.5} 245V${low > 256 ? 256 : low}`;
    }
  }
  add(plot, 'path', { d, class: 'trace' });
  add(plot, 'path', { d: 'M10 603.500h31', class: 'trace' });

  [['0.641', 241, LEFT - 2], ['-0.046', 618, LEFT + 2]].forEach(([t, y, x]) => {
    add(plot, 'path', { d: `M62 ${y + 10.5}H${right}`, class: 'ruler-line' });
    add(plot, 'path', { d: `M4 ${y}H52L62 ${y + 11}L52 ${y + 22}H4l-3-3V${y + 3}z`, class: 'flag' });
    add(plot, 'text', { x, y: y + 17, class: 'flag-text' }, t);
  });
}

function drawOverview() {
  const map = document.getElementById('overview');
  let grid = '';
  for (let i = 0; i <= 10; i++) {
    grid += `M0 ${i * 14 + 0.5}H357M${Math.round(i * 35.6) + 0.5} 0V141`;
  }
  add(map, 'path', { d: grid, class: 'grid' });

  const level = x => (x > 108 && x < 129) || x > 152 ? 25 : (x < 64 && x > 46) || (x > 128 && x < 142) ? 28 : 26;
  const rand = noise(77);
  let d = '';
  for (let x = 1; x < 201; x++) {
    const y = level(x);
    const calm = y === 25;
    d += `M${x + 0.5} ${calm ? 24 : y - 1 - Math.round(rand())}V${calm ? 27 : y + 2 + (rand() < 0.25 ? 3 : 0)}`;
  }
  add(map, 'path', { d, class: 'trace' });
  add(map, 'path', { d: 'M169 0V140', stroke: '#808080', 'stroke-width': 2 });
  add(map, 'path', { d: 'M162.500 67v6M175.500 67v6M162 70.500h14M165 68v4M173 68v4', stroke: '#808080' });
}

drawPlot();
drawOverview();
window.addEventListener('resize', drawPlot);
```
